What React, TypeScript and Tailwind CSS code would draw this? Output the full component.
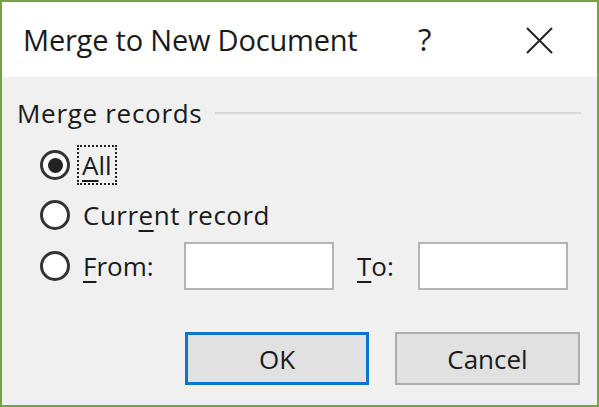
import React from "react";

const font = { fontFamily: '"Open Sans", "Noto Sans", sans-serif' };

const Radio: React.FC<{ checked?: boolean }> = ({ checked }) => (
  <span className="w-[30px] h-[30px] rounded-full border-[3px] border-[#333] bg-white flex items-center justify-center shrink-0">
    {checked && <span className="w-[15px] h-[15px] rounded-full bg-[#222]" />}
  </span>
);

const Key: React.FC<{ children: React.ReactNode }> = ({ children }) => (
  <span className="underline underline-offset-[5px] decoration-[2px]">{children}</span>
);

const App: React.FC = () => {
  return (
    <div
      className="w-[599px] h-[407px] border-[2px] border-[#76a146] flex flex-col text-[#1a1a1a] overflow-hidden"
      style={font}
    >
      <header className="h-[75px] bg-white flex items-center shrink-0">
        <div className="pl-[21px] text-[29px] tracking-[-0.2px] w-[416px] leading-none">Merge to New Document</div>
        <div className="text-[31px] w-[107px] leading-none">?</div>
        <svg width="28" height="28" viewBox="0 0 28 28">
          <path d="M2 2 L27 27 M27 2 L2 27" stroke="#222" strokeWidth="2" fill="none" />
        </svg>
      </header>
      <main className="flex-1 bg-[#f0f0f0] flex flex-col pl-[15px] pr-[16px] pt-[22px] text-[26px] leading-none">
        <div className="h-[28px] flex items-center">
          <span className="tracking-[0.7px]">Merge records</span>
          <span className="flex-1 h-[1.5px] bg-[#d7d7d7] ml-[13px]" />
        </div>
        <div className="h-[40px] mt-[18px] flex items-center pl-[23px]">
          <Radio checked />
          <span className="ml-[7px] h-[40px] px-[3px] flex items-center border-[2px] border-dotted border-[#222]">
            <Key>A</Key>ll
          </span>
        </div>
        <div className="h-[40px] mt-[10px] flex items-center pl-[23px]">
          <Radio />
          <span className="ml-[13px] tracking-[0.5px]">
            Curr<Key>e</Key>nt record
          </span>
        </div>
        <div className="h-[48px] mt-[7px] flex items-center pl-[23px]">
          <Radio />
          <span className="ml-[13px] w-[101px]">
            <Key>F</Key>rom:
          </span>
          <input className="w-[150px] h-[48px] bg-white border-[2px] border-[#b4b4b4] outline-none" />
          <span className="ml-[23px] w-[61px]">
            <Key>T</Key>o:
          </span>
          <input className="w-[150px] h-[48px] bg-white border-[2px] border-[#b4b4b4] outline-none" />
        </div>
        <div className="mt-[42px] flex pl-[168px] gap-[26px]">
          <button className="w-[184px] h-[53px] bg-[#e1e1e1] border-[3px] border-[#0a74cf] text-[26px]">OK</button>
          <button className="w-[185px] h-[53px] bg-[#e1e1e1] border-[2px] border-[#adadad] text-[26px]">Cancel</button>
        </div>
      </main>
    </div>
  );
};

export default App;
